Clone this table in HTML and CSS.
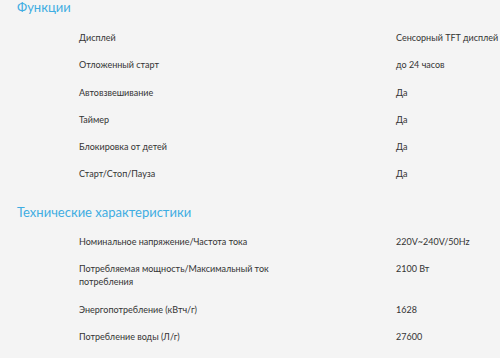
FILE: index.html
```html
<!DOCTYPE html>
<html lang="ru">
<head>
<meta charset="utf-8">
<link rel="stylesheet" href="styles.css">
</head>
<body>
<section class="group">
  <h2 class="group-title">Функции</h2>
  <div class="row"><div class="label">Дисплей</div><div class="value">Сенсорный TFT дисплей</div></div>
  <div class="row"><div class="label">Отложенный старт</div><div class="value">до 24 часов</div></div>
  <div class="row"><div class="label">Автовзвешивание</div><div class="value">Да</div></div>
  <div class="row"><div class="label">Таймер</div><div class="value">Да</div></div>
  <div class="row"><div class="label">Блокировка от детей</div><div class="value">Да</div></div>
  <div class="row"><div class="label">Старт/Стоп/Пауза</div><div class="value">Да</div></div>
</section>
<section class="group group-second">
  <h2 class="group-title">Технические характеристики</h2>
  <div class="row"><div class="label">Номинальное напряжение/Частота тока</div><div class="value">220V~240V/50Hz</div></div>
  <div class="row"><div class="label">Потребляемая мощность/Максимальный ток потребления</div><div class="value">2100 Вт</div></div>
  <div class="row"><div class="label">Энергопотребление (кВтч/г)</div><div class="value">1628</div></div>
  <div class="row"><div class="label">Потребление воды (Л/г)</div><div class="value">27600</div></div>
</section>
</body>
</html>
```

FILE: styles.css
```css
html, body {
  margin: 0;
  padding: 0;
  background: #f4f4f4;
  width: 500px;
  height: 358px;
  overflow: hidden;
}
body {
  font-family: "Lato", "DejaVu Sans", sans-serif;
  color: #333;
}
.group {
  display: flex;
  flex-direction: column;
}
.group-second {
  margin-top: 17px;
}
.group-title {
  margin: 0 0 8px 0;
  padding-left: 17px;
  font-size: 13px;
  line-height: 16px;
  font-weight: 400;
  color: #3fade2;
  position: relative;
  top: -1px;
}
.group-second .group-title {
  margin-bottom: 7px;
}
.row {
  display: grid;
  grid-template-columns: 200px 1fr;
  column-gap: 117px;
  padding: 7px 0 7px 79px;
  font-size: 9px;
  line-height: 13.3px;
}
.label {
  max-width: 195px;
}
.value {
  white-space: nowrap;
}
```
